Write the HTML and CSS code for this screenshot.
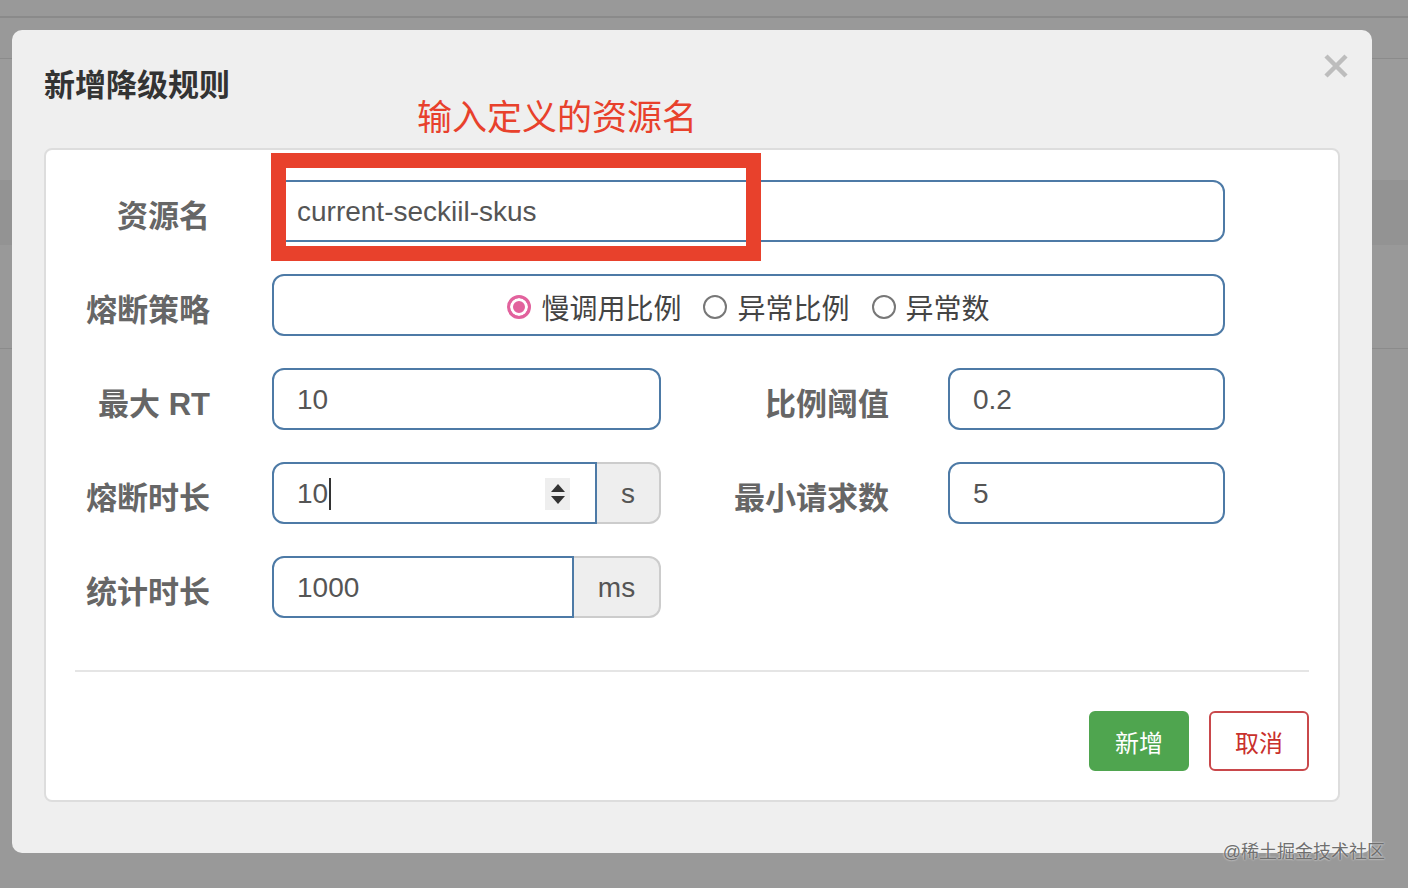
FILE: index.html
```html
<!DOCTYPE html>
<html lang="zh-CN">
<head>
<meta charset="UTF-8">
<meta name="viewport" content="width=device-width, initial-scale=1.0">
<title>新增降级规则</title>
<link rel="stylesheet" href="styles.css">
</head>
<body>

<div class="page">
    <div class="page-top"></div>
    <div class="page-nav"></div>
    <div class="page-head"></div>
    <div class="page-row"></div>
    <div class="page-body"></div>
</div>

<div class="modal">
    <div class="modal-header">
        <h3 class="modal-title">新增降级规则</h3>
        <svg class="close" width="26" height="26" viewBox="0 0 26 26">
            <path d="M3 3 L23 23 M23 3 L3 23" stroke="#bdbdbd" stroke-width="4.5" stroke-linecap="butt"/>
        </svg>
    </div>

    <div class="note">输入定义的资源名</div>
    <div class="note-box"></div>

    <div class="panel">
        <div class="form-grid">
            <label class="label">资源名</label>
            <input type="text" class="field wide" value="current-seckiil-skus">

            <label class="label">熔断策略</label>
            <div class="field wide radios">
                <span class="radio checked"></span><span class="radio-text">慢调用比例</span>
                <span class="radio"></span><span class="radio-text">异常比例</span>
                <span class="radio"></span><span class="radio-text">异常数</span>
            </div>

            <label class="label">最大 RT</label>
            <input type="text" class="field" value="10">
            <label class="label label2">比例阈值</label>
            <input type="text" class="field" value="0.2">

            <label class="label">熔断时长</label>
            <div class="input-group">
                <div class="field group-field">
                    <span class="value">10</span><span class="caret"></span>
                    <span class="spinner"><i class="up"></i><i class="down"></i></span>
                </div>
                <span class="addon s">s</span>
            </div>
            <label class="label label2">最小请求数</label>
            <input type="text" class="field" value="5">

            <label class="label">统计时长</label>
            <div class="input-group">
                <input type="text" class="field group-field" value="1000">
                <span class="addon ms">ms</span>
            </div>
        </div>

        <hr class="divider">

        <div class="footer">
            <button class="btn btn-add">新增</button>
            <button class="btn btn-cancel">取消</button>
        </div>
    </div>
</div>

<div class="watermark">@稀土掘金技术社区</div>

</body>
</html>
```

FILE: styles.css
```css
body {
    margin: 0;
    padding: 0;
    background-color: #999;
    font-family: "Liberation Sans", "Noto Sans CJK SC", sans-serif;
    color: #555;
    overflow: hidden;
}
.page-top {
    height: 16px;
    border-bottom: 2px solid #8a8a8a;
}
.page-nav {
    height: 40px;
    border-bottom: 1px solid #8b8b8b;
}
.page-head {
    height: 121px;
    background-color: #9b9b9b;
}
.page-row {
    height: 65px;
    background-color: #939393;
}
.page-body {
    height: 103px;
    border-bottom: 1px solid #8b8b8b;
}
.modal {
    position: absolute;
    left: 12px;
    top: 30px;
    width: 1360px;
    height: 823px;
    box-sizing: border-box;
    padding: 34px 32px 51px;
    background-color: #efefef;
    border-radius: 10px;
}
.modal-header {
    display: flex;
    justify-content: space-between;
    align-items: flex-start;
    height: 84px;
}
.modal-title {
    margin: 0;
    padding-top: 2px;
    font-size: 31px;
    line-height: 40px;
    font-weight: bold;
    color: #333;
}
.close {
    margin-top: -11px;
    margin-right: -9px;
}
.note {
    position: absolute;
    left: 405px;
    top: 68px;
    font-size: 35px;
    line-height: 40px;
    color: #e8412c;
}
.note-box {
    position: absolute;
    left: 259px;
    top: 123px;
    width: 490px;
    height: 108px;
    box-sizing: border-box;
    border: 15px solid #e8412c;
    z-index: 2;
}
.panel {
    background-color: #fff;
    border: 2px solid #ddd;
    border-radius: 8px;
    padding: 30px 29px 29px;
}
.form-grid {
    display: grid;
    grid-template-columns: 197px 389px 287px 277px;
    grid-auto-rows: 62px;
    row-gap: 32px;
}
.label {
    display: flex;
    align-items: center;
    justify-content: flex-end;
    padding: 5px 62px 0 0;
    font-size: 31px;
    font-weight: bold;
    color: #666;
}
.label2 {
    padding-right: 59px;
}
.field {
    box-sizing: border-box;
    width: 100%;
    height: 62px;
    margin: 0;
    padding: 1px 0 0 23px;
    border: 2px solid #4d7aa6;
    border-radius: 12px;
    background-color: #fff;
    font-family: "Liberation Sans", "Noto Sans CJK SC", sans-serif;
    font-size: 28px;
    color: #555;
    outline: none;
}
.wide {
    grid-column: 2 / 5;
}
.radios {
    display: flex;
    align-items: center;
    justify-content: center;
    padding: 4px 0 0 0;
    color: #444;
}
.radio {
    box-sizing: border-box;
    width: 24px;
    height: 24px;
    border: 2px solid #777;
    border-radius: 50%;
    margin-right: 10px;
}
.radio.checked {
    border: 3px solid #e2629d;
    background-color: #e2629d;
    box-shadow: inset 0 0 0 3px #fff;
}
.radio-text {
    margin-right: 22px;
}
.radio-text:last-child {
    margin-right: 0;
}
.input-group {
    display: flex;
}
.group-field {
    flex: 1;
    border-radius: 12px 0 0 12px;
    display: flex;
    align-items: center;
}
.caret {
    width: 2px;
    height: 32px;
    margin-left: 1px;
    background-color: #333;
}
.spinner {
    margin-left: auto;
    margin-right: 25px;
    width: 25px;
    height: 32px;
    background-color: #eee;
    display: flex;
    flex-direction: column;
    align-items: center;
    justify-content: center;
    gap: 4px;
}
.spinner i {
    width: 0;
    height: 0;
    border-left: 7px solid transparent;
    border-right: 7px solid transparent;
}
.spinner .up {
    border-bottom: 8px solid #333;
}
.spinner .down {
    border-top: 8px solid #333;
}
.addon {
    box-sizing: border-box;
    height: 62px;
    padding-top: 2px;
    display: flex;
    align-items: center;
    justify-content: center;
    background-color: #eee;
    border: 2px solid #ccc;
    border-left: none;
    border-radius: 0 12px 12px 0;
    font-size: 28px;
    color: #555;
}
.addon.s {
    width: 64px;
}
.addon.ms {
    width: 87px;
}
.divider {
    margin: 52px 0 39px;
    border: none;
    border-top: 2px solid #e5e5e5;
}
.footer {
    display: flex;
    justify-content: flex-end;
    gap: 20px;
}
.btn {
    width: 100px;
    height: 60px;
    border-radius: 6px;
    font-family: "Liberation Sans", "Noto Sans CJK SC", sans-serif;
    font-size: 24px;
    cursor: pointer;
}
.btn-add {
    background-color: #4fa54f;
    border: 2px solid #4fa54f;
    color: #fff;
}
.btn-cancel {
    background-color: #fff;
    border: 2px solid #c9484b;
    color: #c9302c;
}
.watermark {
    position: absolute;
    right: 23px;
    top: 840px;
    font-size: 18px;
    line-height: 24px;
    color: #6f6f6f;
    text-shadow: 0 0 2px #fff;
}
```
